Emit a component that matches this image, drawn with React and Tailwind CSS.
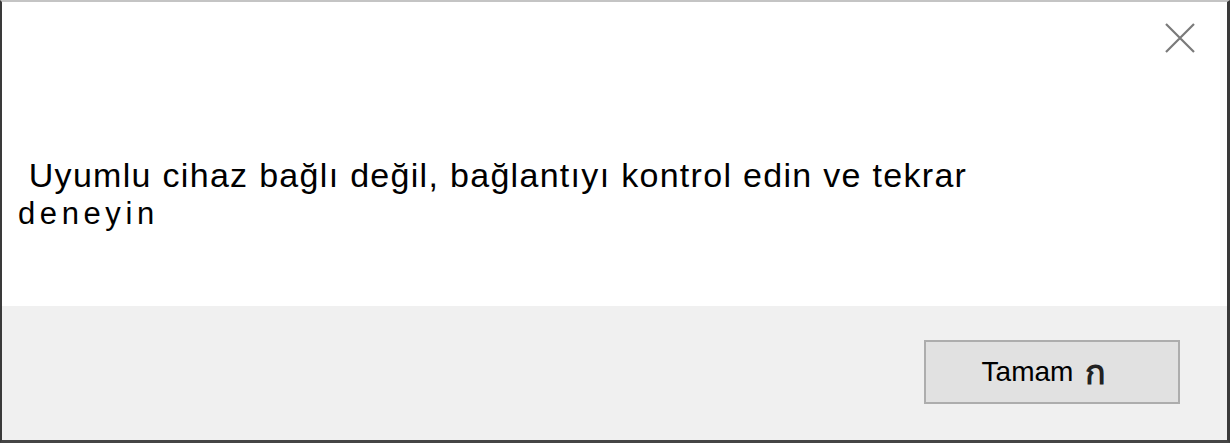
export default function App() {
  return (
    <div className="w-[1230px] h-[443px] flex flex-col bg-white border-t-2 border-t-[#c4c4c4] border-l-2 border-l-[#3a3a3a] border-r-[3px] border-r-[#3a3a3a] border-b-[3px] border-b-[#454545] font-['Liberation_Sans',Arial,sans-serif] text-black overflow-hidden">
      {/* 본문 영역 */}
      <div className="h-[304px] flex flex-col bg-white">
        <div className="flex justify-end pt-[21px] pr-[32px]">
          <svg width="30" height="30" viewBox="0 0 30 30" className="text-[#7a7a7a]">
            <path d="M1 1 L29 29 M29 1 L1 29" stroke="currentColor" strokeWidth="2.2" fill="none" />
          </svg>
        </div>
        <div className="mt-[103px] pl-[16px]">
          <div className="whitespace-pre text-[34px] leading-[38px] tracking-[1.3px]">{" Uyumlu cihaz bağlı değil, bağlantıyı kontrol edin ve tekrar"}</div>
          <div className="text-[31px] leading-[40px] tracking-[4.6px]">deneyin</div>
        </div>
      </div>

      {/* 하단 버튼 영역 */}
      <div className="flex-1 bg-[#f0f0f0] flex justify-end items-start pt-[34px] pr-[47px]">
        <button className="w-[256px] h-[64px] bg-[#e1e1e1] border-2 border-[#adadad] flex items-center justify-center text-[28px] pr-[16px]">
          <span>Tamam</span>
          <span className="ml-[12px] text-[34px] leading-[34px] font-bold text-[#222]">ก</span>
        </button>
      </div>
    </div>
  )
}
